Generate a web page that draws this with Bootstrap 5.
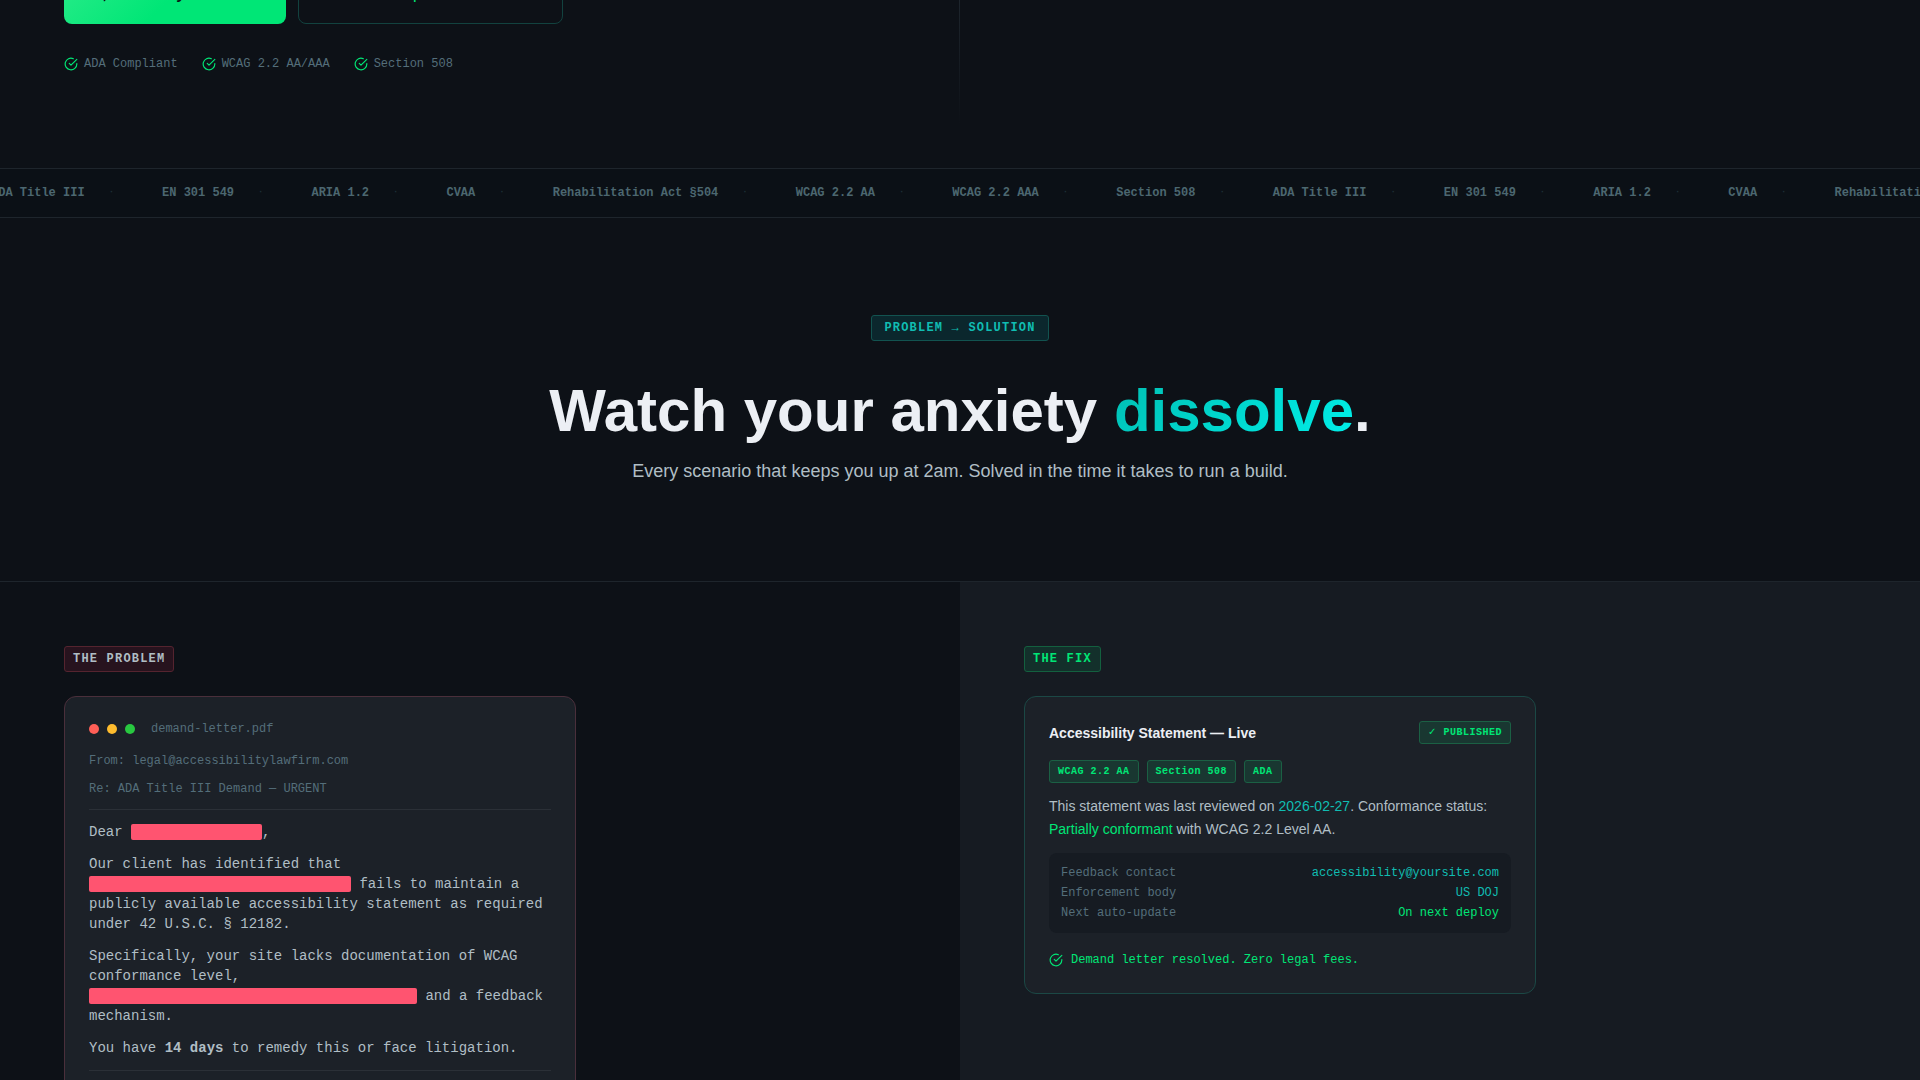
<!DOCTYPE html>
<html lang="en" data-bs-theme="dark">
<head>
<meta charset="utf-8">
<meta name="viewport" content="width=device-width, initial-scale=1">
<title>Accessibility Statements</title>
<link href="https://cdn.jsdelivr.net/npm/bootstrap@5.3.0/dist/css/bootstrap.min.css" rel="stylesheet">
<style>
:root {
  --ink: #0d1117; --panel: #161b22; --surface: #1c2128;
  --line: #1e252c; --green: #00e676; --teal: #10bdb2;
  --muted: #546e7a; --soft: #b0bec5; --bright: #eceff4;
  --mono: "Liberation Mono", "DejaVu Sans", monospace;
}
body { background: var(--ink); color: var(--soft); font-family: "Liberation Sans", Arial, sans-serif; overflow: hidden; }
.mono { font-family: var(--mono); }
.t12 { font-size: 12px; line-height: 20px; }
.t14 { font-size: 14px; line-height: 20px; }
.c-muted { color: var(--muted); }
.c-green { color: var(--green); }
.c-teal { color: var(--teal); }
.c-bright { color: var(--bright); }

/* hero */
.hero { margin-top: -36px; height: 204px; padding: 0 64px; position: relative; }
.hero::after { content: ""; position: absolute; left: calc(50% - 1px); top: 0; bottom: 44px; width: 1px; background: linear-gradient(#222b33, transparent); }
.cta { height: 60px; padding: 0 33px; font-size: 16px; border-radius: 8px; }
.cta-main, .cta-main:hover { background: linear-gradient(135deg, #2bec8a 0%, #00e676 50%); color: #0d1117; border: 0; font-weight: 700; }
.cta-alt, .cta-alt:hover { padding: 0 32px; border: 1px solid #12423f; color: var(--green); }
.proof { margin-top: 30px; gap: 24px; }
.proof li { gap: 6px; }

/* ticker */
.ticker { border-top: 1px solid var(--line); border-bottom: 1px solid var(--line); height: 50px; background: #0b1016; }
.track { margin: 0 0 0 -9px; gap: 48px; font-size: 12px; font-weight: 700; color: #4c6770; }
.track li { gap: 24px; }
.track li::after { content: "·"; font-size: 9px; color: #1f3038; }

/* intro */
.intro { padding: 97px 24px 95px; border-bottom: 1px solid var(--line); }
.tag { display: inline-block; font-family: var(--mono); font-size: 12px; line-height: 18px; font-weight: 700; letter-spacing: 1.2px; padding: 3px 8px; border: 1px solid; border-radius: 3px; }
.tag-teal { color: var(--teal); background: #0b272d; border-color: #125350; padding-left: 12px; padding-right: 12px; }
.tag-red { color: var(--soft); background: #27131e; border-color: #55242f; }
.tag-green { color: var(--green); background: #13302b; border-color: #13603f; }
.headline { font-size: 60px; line-height: 66px; font-weight: 700; color: var(--bright); margin: 37px 0 13px; }
.headline em { font-style: normal; background: linear-gradient(135deg, #00bfb3, #00f0ea); -webkit-background-clip: text; background-clip: text; color: transparent; }
.sub { font-size: 18px; line-height: 29px; }

/* comparison */
.pane { padding: 63px 64px; min-height: 560px; }
.pane-fix { background: var(--panel); }
.sheet { background: var(--surface); border: 1px solid; border-radius: 12px; padding: 24px; max-width: 512px; margin-top: 24px; }
.sheet-red { border-color: #4a2f3b; }
.sheet-green { border-color: #1b4845; }
.dot { width: 10px; height: 10px; border-radius: 50%; }
.titlebar { height: 16px; margin-bottom: 14px; }
.subject { padding-bottom: 10px; margin-bottom: 12px; }
.letter p { margin-bottom: 12px; }
.rule-b { border-bottom: 1px solid #2b3037; }
.redact { display: inline-block; height: 16px; border-radius: 2px; background: #ff5470; vertical-align: -4px; }
.w-s { width: 131px; } .w-m { width: 262px; } .w-l { width: 328px; }
.chip { font-family: var(--mono); font-size: 10px; line-height: 15px; font-weight: 700; letter-spacing: .5px; padding: 3px 8px; border: 1px solid #1b6044; border-radius: 3px; background: #193731; color: var(--green); }
.stmt { font-size: 14px; line-height: 23px; margin: 12px 0; }
.facts { background: var(--panel); border-radius: 8px; padding: 10px 12px; }
.resolved { font-size: 12px; line-height: 18px; margin-top: 18px; }
</style>
<script src="https://cdn.jsdelivr.net/npm/bootstrap@5.3.0/dist/js/bootstrap.bundle.min.js"></script>
</head>
<body>
<svg class="d-none" xmlns="http://www.w3.org/2000/svg">
  <symbol id="check" viewBox="0 0 24 24" fill="none" stroke="currentColor" stroke-width="2" stroke-linecap="round" stroke-linejoin="round"><path d="M22 11.08V12a10 10 0 1 1-5.93-9.14"/><path d="M22 4 12 14.01l-3-3"/></symbol>
  <symbol id="bolt" viewBox="0 0 24 24" fill="none" stroke="currentColor" stroke-width="2" stroke-linecap="round" stroke-linejoin="round"><path d="M13 2 3 14h9l-1 8 10-12h-9z"/></symbol>
</svg>

<header class="hero">
  <div class="d-flex">
    <button type="button" class="btn cta cta-main d-flex align-items-center gap-2 me-2"><svg width="16" height="16" aria-hidden="true"><use href="#bolt"/></svg>Start my free trial</button>
    <a href="#fix" class="btn cta cta-alt d-flex align-items-center ms-1">View a sample statement →</a>
  </div>
  <ul class="proof list-unstyled d-flex mb-0 mono t12 c-muted">
    <li class="d-flex align-items-center"><svg class="c-green" width="14" height="14" aria-hidden="true"><use href="#check"/></svg>ADA Compliant</li>
    <li class="d-flex align-items-center"><svg class="c-green" width="14" height="14" aria-hidden="true"><use href="#check"/></svg>WCAG 2.2 AA/AAA</li>
    <li class="d-flex align-items-center"><svg class="c-green" width="14" height="14" aria-hidden="true"><use href="#check"/></svg>Section 508</li>
  </ul>
</header>

<div class="ticker overflow-hidden d-flex align-items-center">
  <ul class="track list-unstyled d-flex mono text-nowrap">
    <li class="d-flex align-items-center">ADA Title III</li>
    <li class="d-flex align-items-center">EN 301 549</li>
    <li class="d-flex align-items-center">ARIA 1.2</li>
    <li class="d-flex align-items-center">CVAA</li>
    <li class="d-flex align-items-center">Rehabilitation Act §504</li>
    <li class="d-flex align-items-center">WCAG 2.2 AA</li>
    <li class="d-flex align-items-center">WCAG 2.2 AAA</li>
    <li class="d-flex align-items-center">Section 508</li>
    <li class="d-flex align-items-center">ADA Title III</li>
    <li class="d-flex align-items-center">EN 301 549</li>
    <li class="d-flex align-items-center">ARIA 1.2</li>
    <li class="d-flex align-items-center">CVAA</li>
    <li class="d-flex align-items-center">Rehabilitation Act §504</li>
  </ul>
</div>

<main>
  <section class="intro d-flex flex-column align-items-center text-center">
    <span class="tag tag-teal">PROBLEM → SOLUTION</span>
    <h2 class="headline">Watch your anxiety <em>dissolve</em>.</h2>
    <p class="sub mb-0">Every scenario that keeps you up at 2am. Solved in the time it takes to run a build.</p>
  </section>

  <section class="row g-0">
    <div class="col-6 pane">
      <span class="tag tag-red">THE PROBLEM</span>
      <article class="sheet sheet-red letter mono t14">
        <div class="titlebar d-flex align-items-center gap-2">
          <span class="dot" style="background:#ff5f57"></span>
          <span class="dot" style="background:#febc2e"></span>
          <span class="dot" style="background:#28c840"></span>
          <span class="t12 c-muted ms-2">demand-letter.pdf</span>
        </div>
        <div class="t12 c-muted mb-2">From: legal@accessibilitylawfirm.com</div>
        <div class="subject t12 c-muted rule-b">Re: ADA Title III Demand — URGENT</div>
        <div class="rule-b">
          <p>Dear <span class="redact w-s"></span>,</p>
          <p>Our client has identified that <span class="redact w-m"></span> fails to maintain a publicly available accessibility statement as required under 42 U.S.C. § 12182.</p>
          <p>Specifically, your site lacks documentation of WCAG conformance level, <span class="redact w-l"></span> and a feedback mechanism.</p>
          <p>You have <strong>14 days</strong> to remedy this or face litigation.</p>
        </div>
      </article>
    </div>
    <div class="col-6 pane pane-fix" id="fix">
      <span class="tag tag-green">THE FIX</span>
      <article class="sheet sheet-green">
        <div class="d-flex justify-content-between align-items-center mb-3">
          <h3 class="t14 fw-bold mb-0 c-bright">Accessibility Statement — Live</h3>
          <span class="chip">✓ PUBLISHED</span>
        </div>
        <div class="d-flex gap-2">
          <span class="chip">WCAG 2.2 AA</span>
          <span class="chip">Section 508</span>
          <span class="chip">ADA</span>
        </div>
        <p class="stmt">This statement was last reviewed on <span class="c-teal">2026-02-27</span>. Conformance status: <span class="c-green">Partially conformant</span> with WCAG 2.2 Level AA.</p>
        <div class="facts mono t12">
          <div class="d-flex justify-content-between"><span class="c-muted">Feedback contact</span><a class="c-teal text-decoration-none" href="mailto:accessibility@yoursite.com">accessibility@yoursite.com</a></div>
          <div class="d-flex justify-content-between"><span class="c-muted">Enforcement body</span><span class="c-teal">US DOJ</span></div>
          <div class="d-flex justify-content-between"><span class="c-muted">Next auto-update</span><span class="c-green">On next deploy</span></div>
        </div>
        <div class="resolved d-flex align-items-center gap-2 mono c-green"><svg width="14" height="14" aria-hidden="true"><use href="#check"/></svg>Demand letter resolved. Zero legal fees.</div>
      </article>
    </div>
  </section>
</main>
</body>
</html>
